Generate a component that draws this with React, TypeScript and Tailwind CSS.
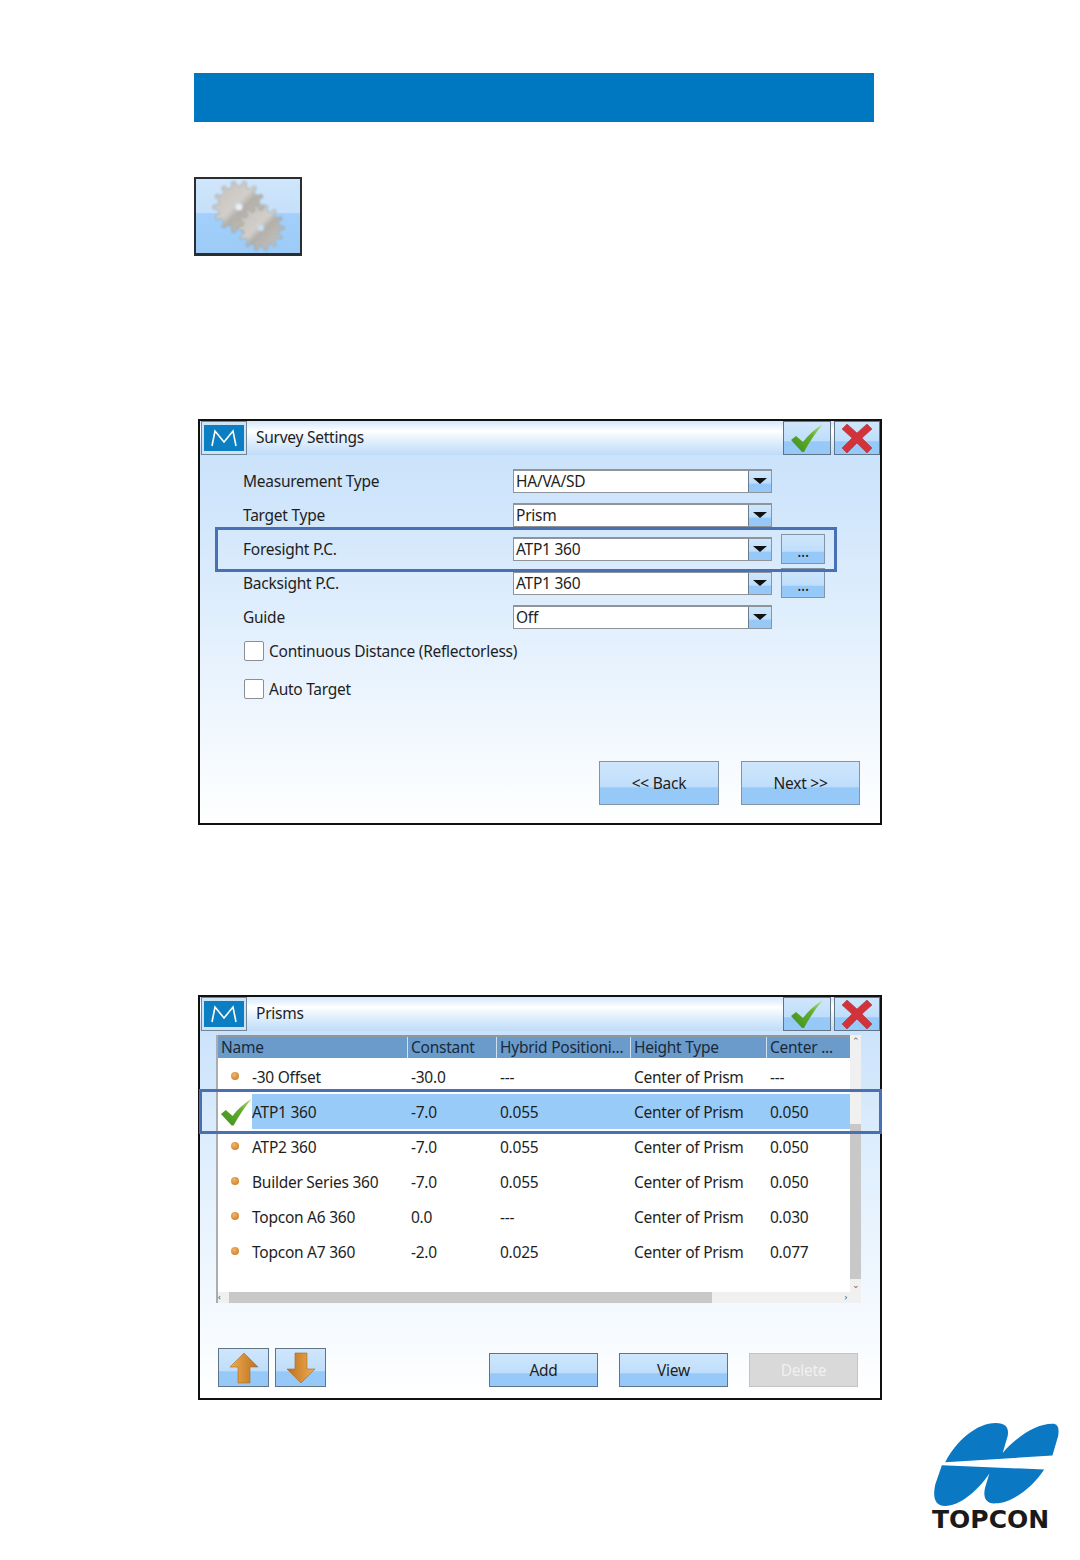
import type React from "react"

const gloss = "bg-[linear-gradient(#cfe6fc_0%,#bfdefb_58%,#96c9f8_62%,#96c9f8_100%)]"
const font = "font-['Noto_Sans',sans-serif] text-[15.5px] tracking-[-0.25px] text-[#1e1e1e]"

function gearPath(cx: number, cy: number, outer: number, inner: number, teeth: number) {
  const pts: string[] = []
  const step = (Math.PI * 2) / teeth
  for (let i = 0; i < teeth; i++) {
    const a = i * step
    const list: [number, number][] = [
      [a - step * 0.28, inner],
      [a - step * 0.14, outer],
      [a + step * 0.14, outer],
      [a + step * 0.28, inner],
    ]
    list.forEach(([ang, r]) => pts.push(`${(cx + Math.cos(ang) * r).toFixed(1)} ${(cy + Math.sin(ang) * r).toFixed(1)}`))
  }
  return `M${pts.join("L")}Z`
}

function GearIcon() {
  return (
    <div className={`relative ml-[194px] mt-[55px] h-[79px] w-[108px] border-2 border-b-[3px] border-[#2a2e33] bg-[linear-gradient(#cfe6fb_0%,#c6e0fa_45%,#a3d0fa_47%,#9ccbf8_100%)]`}>
      <svg viewBox="0 0 104 74" className="absolute inset-0 h-full w-full blur-[0.8px]">
        <defs>
          <linearGradient id="gear" x1="0" y1="0" x2="1" y2="1">
            <stop offset="0" stopColor="#c4c1bc" />
            <stop offset="0.45" stopColor="#d2cfca" />
            <stop offset="0.55" stopColor="#b3b0aa" />
            <stop offset="1" stopColor="#cbc8c3" />
          </linearGradient>
        </defs>
        <path d={gearPath(43, 28, 26, 21, 14)} fill="url(#gear)" stroke="#8f8c88" strokeWidth="0.5" />
        <circle cx="43" cy="28" r="3.5" fill="#e4f1fd" />
        <path d={gearPath(65, 49, 23, 18, 14)} fill="url(#gear)" stroke="#8f8c88" strokeWidth="0.5" />
        <circle cx="65" cy="49" r="3" fill="#c5e1fb" />
      </svg>
    </div>
  )
}

function TitleBar({ title }: { title: string }) {
  return (
    <div className="flex h-[34px] items-stretch bg-[linear-gradient(#d3e7fb_0%,#ffffff_30%,#e4f1fd_55%,#bfdcf8_100%)]">
      <div className="ml-[1px] flex w-[46px] items-center justify-center border border-[#6f8596] bg-[#cfe3f6]">
        <div className="flex h-[26px] w-[40px] items-center justify-center bg-[#0b7fc1]">
          <svg viewBox="0 0 26 18" className="h-[18px] w-[26px]" fill="none" stroke="#fff" strokeWidth="1.6">
            <path d="M1 17 L4 2 L13 13 L22 2 L25 17" />
          </svg>
        </div>
      </div>
      <div className="ml-[9px] flex flex-1 items-center pb-[1px]">{title}</div>
      <div className={`flex w-[48px] items-center justify-center border border-[#5f7486] ${gloss}`}>
        <CheckMark className="h-[30px] w-[34px]" />
      </div>
      <div className={`ml-[3px] flex w-[46px] items-center justify-center border border-[#5f7486] ${gloss}`}>
        <svg viewBox="0 0 32 30" className="h-[30px] w-[32px]">
          <path d="M1 6 L6 1 L16 10 L26 1 L31 6 L21 15 L31 25 L26 30 L16 20 L6 30 L1 25 L11 15 Z" fill="#d2333a" stroke="#a92a30" strokeWidth="0.5" />
        </svg>
      </div>
    </div>
  )
}

function CheckMark({ className }: { className: string }) {
  return (
    <svg viewBox="0 0 34 30" className={className}>
      <defs>
        <linearGradient id="chk" x1="0" y1="1" x2="1" y2="0">
          <stop offset="0" stopColor="#3f8f1c" />
          <stop offset="0.6" stopColor="#62ad2e" />
          <stop offset="1" stopColor="#b9e08a" />
        </linearGradient>
      </defs>
      <path d="M1 17 L6 13 L13 19 C18 12 25 6 33 1 C26 9 20 18 14 29 L12 29 Z" fill="url(#chk)" />
    </svg>
  )
}

function Combo({ value }: { value: string }) {
  return (
    <div className="flex h-[24px] w-[259px] border border-t-2 border-[#8e9499] bg-white">
      <div className="flex flex-1 items-center pl-[2px] pt-[1px]">{value}</div>
      <div className={`flex w-[23px] items-start justify-center border-l border-[#6b7d8c] pt-[7px] ${gloss}`}>
        <div className="h-0 w-0 border-x-[7px] border-t-[6px] border-x-transparent border-t-[#111]" />
      </div>
    </div>
  )
}

function FormRow({ label, value, more }: { label: string; value: string; more?: boolean }) {
  return (
    <div className="flex h-[34px] items-center">
      <div className="w-[270px] pt-[2px]">{label}</div>
      <Combo value={value} />
      {more && (
        <div className={`ml-[9px] flex h-[30px] w-[44px] items-end justify-center border border-[#8195a6] pb-[2px] leading-[20px] ${gloss}`}>
          ...
        </div>
      )}
    </div>
  )
}

function CheckRow({ label, className }: { label: string; className?: string }) {
  return (
    <div className={`flex h-[34px] items-center pl-[1px] ${className ?? ""}`}>
      <div className="h-[20px] w-[20px] rounded-[2px] border border-[#8a8f94] bg-white" />
      <span className="ml-[5px] pt-[2px]">{label}</span>
    </div>
  )
}

function GlossButton({ label, className, children }: { label?: string; className: string; children?: React.ReactNode }) {
  return (
    <div className={`flex items-center justify-center border border-[#5f7486] ${gloss} ${className}`}>
      {label && <span className="pt-[2px]">{label}</span>}
      {children}
    </div>
  )
}

function SurveySettings() {
  return (
    <div className="relative ml-[198px] mt-[163px] flex h-[406px] w-[684px] flex-col border-2 border-[#111] bg-[linear-gradient(#c6e0fa_0%,#d8eafc_35%,#ffffff_100%)]">
      <TitleBar title="Survey Settings" />
      <div className="flex flex-1 flex-col pl-[43px] pr-[20px] pt-[9px]">
        <FormRow label="Measurement Type" value="HA/VA/SD" />
        <FormRow label="Target Type" value="Prism" />
        <FormRow label="Foresight P.C." value="ATP1 360" more />
        <FormRow label="Backsight P.C." value="ATP1 360" more />
        <FormRow label="Guide" value="Off" />
        <CheckRow label="Continuous Distance (Reflectorless)" />
        <CheckRow label="Auto Target" className="mt-[4px]" />
        <div className="mt-auto mb-[18px] flex justify-end gap-[22px]">
          <GlossButton label="<< Back" className="h-[44px] w-[120px] border-[#8195a6]" />
          <GlossButton label="Next >>" className="h-[44px] w-[119px] border-[#8195a6]" />
        </div>
      </div>
      <div className="absolute left-[15px] top-[106px] h-[45px] w-[622px] border-[3.5px] border-[#4a70b4]" />
    </div>
  )
}

const columns = "grid grid-cols-[189px_89px_134px_136px_84px]"

const prisms = [
  { name: "-30 Offset", constant: "-30.0", hybrid: "---", center: "---" },
  { name: "ATP1 360", constant: "-7.0", hybrid: "0.055", center: "0.050", active: true },
  { name: "ATP2 360", constant: "-7.0", hybrid: "0.055", center: "0.050" },
  { name: "Builder Series 360", constant: "-7.0", hybrid: "0.055", center: "0.050" },
  { name: "Topcon A6 360", constant: "0.0", hybrid: "---", center: "0.030" },
  { name: "Topcon A7 360", constant: "-2.0", hybrid: "0.025", center: "0.077" },
]

function PrismRow({ row }: { row: (typeof prisms)[number] }) {
  return (
    <div className={`${columns} h-[35px] items-center`}>
      <div className="flex h-full items-center">
        <div className="flex w-[34px] justify-center">
          {row.active ? (
            <CheckMark className="relative left-[1px] h-[30px] w-[33px]" />
          ) : (
            <div className="relative -top-[1px] h-[8px] w-[8px] rounded-full bg-[radial-gradient(circle_at_40%_35%,#f0b566,#c8731e)]" />
          )}
        </div>
        <div className={`flex h-full flex-1 items-center pt-[2px] ${row.active ? "bg-[#99cbf9]" : ""}`}>{row.name}</div>
      </div>
      <div className={`flex h-full items-center pl-[4px] pt-[2px] ${row.active ? "bg-[#99cbf9]" : ""}`}>{row.constant}</div>
      <div className={`flex h-full items-center pl-[4px] pt-[2px] ${row.active ? "bg-[#99cbf9]" : ""}`}>{row.hybrid}</div>
      <div className={`flex h-full items-center pl-[4px] pt-[2px] ${row.active ? "bg-[#99cbf9]" : ""}`}>Center of Prism</div>
      <div className={`flex h-full items-center pl-[4px] pt-[2px] ${row.active ? "bg-[#99cbf9]" : ""}`}>{row.center}</div>
    </div>
  )
}

function PrismTable() {
  return (
    <div className="ml-[16px] mt-[4px] w-[645px] border-l-2 border-[#a9adb1]">
      <div className="flex h-[257px]">
        <div className="w-[632px] bg-white">
          <div className={`${columns} h-[23px] border-t-2 border-[#8f979e] bg-[#6b9bcb] leading-[21px] text-[#1a2a3a]`}>
            {["Name", "Constant", "Hybrid Positioni...", "Height Type", "Center ..."].map((h, i) => (
              <div key={h} className={`whitespace-nowrap pl-[3px] ${i > 0 ? "border-l border-[#cfe0f0]" : ""}`}>
                {h}
              </div>
            ))}
          </div>
          <div className="h-[1px]" />
          {prisms.map((row) => (
            <PrismRow key={row.name} row={row} />
          ))}
        </div>
        <div className="flex w-[11px] flex-col bg-[#f0f0f0]">
          <div className="h-[89px] pl-[2px] text-[9px] leading-[12px] text-[#666]">⌃</div>
          <div className="h-[155px] bg-[#c8c8c8]" />
          <div className="pl-[2px] text-[9px] leading-[12px] text-[#666]">⌄</div>
        </div>
      </div>
      <div className="flex h-[11px] items-stretch bg-[#f0f0f0]">
        <div className="w-[11px] text-[9px] leading-[10px] text-[#555]">‹</div>
        <div className="w-[483px] bg-[#c8c8c8]" />
        <div className="ml-auto mr-[14px] text-[9px] leading-[10px] text-[#555]">›</div>
      </div>
    </div>
  )
}

function ArrowIcon({ down }: { down?: boolean }) {
  return (
    <svg viewBox="0 0 30 32" className={`h-[32px] w-[30px] ${down ? "rotate-180" : ""}`}>
      <defs>
        <linearGradient id={down ? "arrD" : "arrU"} x1="0" y1="0" x2="1" y2="0">
          <stop offset="0" stopColor="#eeae52" />
          <stop offset="1" stopColor="#bd6f1c" />
        </linearGradient>
      </defs>
      <path d="M15 1 L29 15 L21 15 L21 31 L9 31 L9 15 L1 15 Z" fill={`url(#${down ? "arrD" : "arrU"})`} stroke="#a9682a" strokeWidth="0.6" />
    </svg>
  )
}

function Prisms() {
  return (
    <div className="relative ml-[198px] mt-[170px] flex h-[405px] w-[684px] flex-col border-2 border-[#111] bg-[linear-gradient(#c6e0fa_0%,#e2f0fd_45%,#ffffff_100%)]">
      <TitleBar title="Prisms" />
      <PrismTable />
      <div className="mt-auto mb-[11px] flex items-end pl-[18px]">
        <GlossButton className="h-[39px] w-[51px]">
          <ArrowIcon />
        </GlossButton>
        <GlossButton className="ml-[6px] h-[39px] w-[51px]">
          <ArrowIcon down />
        </GlossButton>
        <GlossButton label="Add" className="ml-[163px] h-[34px] w-[109px]" />
        <GlossButton label="View" className="ml-[21px] h-[34px] w-[109px]" />
        <div className="ml-[21px] flex h-[34px] w-[109px] items-center justify-center border border-[#c4c4c4] bg-[#d9d9d9] pt-[2px] text-[#f0f0f0]">
          Delete
        </div>
      </div>
      <div className="absolute -left-[1px] top-[92px] h-[45px] w-[683px] border-[3.5px] border-[#4a70b4]" />
    </div>
  )
}

function Logo() {
  return (
    <div className="ml-[932px] mt-[23px] w-[130px]">
      <svg viewBox="33 40 384 250" className="h-[83px] w-[128px]">
        <path
          d="M72 158 C105 95 165 40 225 40 C255 40 265 55 260 80 L245 130 C290 80 345 42 395 42 C412 42 416 55 412 80 L395 138 Z"
          fill="#0a78c2"
        />
        <path
          d="M62 167 L370 180 C335 235 270 282 225 282 C195 285 185 265 192 235 L205 192 C170 245 115 290 72 290 C42 290 33 265 42 225 Z"
          fill="#0a78c2"
        />
      </svg>
      <div className="mt-[1px] font-['DejaVu_Sans',sans-serif] text-[25px] font-bold leading-[26px] tracking-normal text-[#1a1a1a]">TOPCON</div>
    </div>
  )
}

export default function App() {
  return (
    <div className={`h-[1560px] w-[1080px] overflow-hidden bg-white pt-[73px] ${font}`}>
      <div className="ml-[194px] h-[49px] w-[680px] bg-[#0077c1]" />
      <GearIcon />
      <SurveySettings />
      <Prisms />
      <Logo />
    </div>
  )
}
